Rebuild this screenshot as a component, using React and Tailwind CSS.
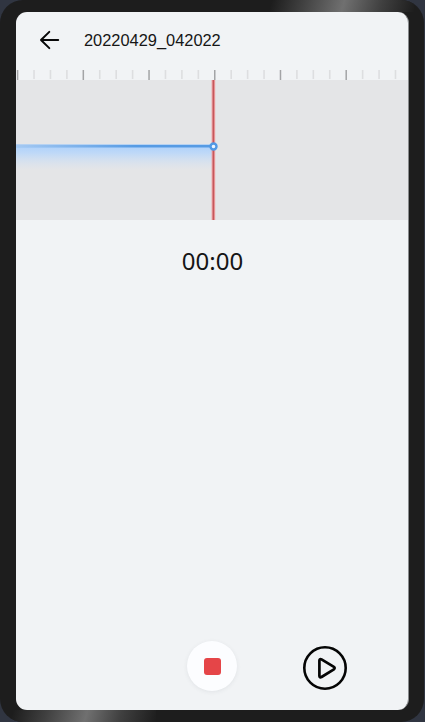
const ticks = Array.from({ length: 24 }, (_, i) => ({
  x: 1.6 + i * 16.43,
  major: i % 4 === 0,
}));

function Header() {
  return (
    <header className="flex h-[58px] shrink-0 items-center pb-0.5 pl-[23px]">
      <svg width="22" height="20" viewBox="0 0 22 20" fill="none" stroke="#080808" strokeWidth="2" strokeLinecap="round" strokeLinejoin="round" aria-label="Back">
        <path d="M10.3 1.9 2 10l8.3 8.1M2 10h17.2" />
      </svg>
      <h1 className="ml-[23px] font-['Liberation_Sans',sans-serif] text-[16.4px] leading-5 text-[#161616]">20220429_042022</h1>
    </header>
  );
}

function Ruler() {
  return (
    <svg className="block h-[10px] w-full shrink-0" viewBox="0 0 392 10" width="392" height="10">
      {ticks.map((t) => (
        <path key={t.x} d={`M${t.x} 0v${t.major ? 10 : 9}`} stroke={t.major ? '#a3a4a6' : '#dddee0'} strokeWidth={t.major ? 1.5 : 1.6} />
      ))}
    </svg>
  );
}

function Waveform() {
  return (
    <svg className="block h-[140px] w-full shrink-0 bg-[#e4e5e7]" width="392" height="140" viewBox="0 0 392 140">
      <defs>
        <linearGradient id="glow" x1="0" y1="0" x2="0" y2="1">
          <stop offset="0" stopColor="#aed1fb" />
          <stop offset="0.3" stopColor="#bdd8f8" stopOpacity="0.95" />
          <stop offset="1" stopColor="#d3e1f2" stopOpacity="0" />
        </linearGradient>
        <linearGradient id="trace" gradientUnits="userSpaceOnUse" x1="0" y1="0" x2="120" y2="0">
          <stop offset="0" stopColor="#a5c9f2" />
          <stop offset="1" stopColor="#569be4" />
        </linearGradient>
      </defs>
      <rect x="0" y="66" width="197" height="24" fill="url(#glow)" />
      <rect x="0" y="64" width="197" height="4" fill="#9cc7f8" fillOpacity="0.65" />
      <rect x="0" y="65" width="197" height="2.4" fill="url(#trace)" />
      <rect x="195.6" y="0" width="3.6" height="140" fill="#f0a3a5" />
      <rect x="196.6" y="0" width="1.6" height="140" fill="#c4585c" />
      <circle cx="197.5" cy="66.5" r="3" fill="#edf5ff" stroke="#5299e5" strokeWidth="2.4" />
    </svg>
  );
}

function Controls() {
  return (
    <footer className="mt-auto mb-[18px] flex h-[52px] shrink-0 items-center pl-[171px]">
      <button className="flex size-[50px] items-center justify-center rounded-full bg-[#fcfdff] shadow-[0_1px_4px_rgba(70,80,90,0.09)]" aria-label="Stop">
        <span className="size-[17px] rounded-[3px] bg-[#e54548]" />
      </button>
      <button className="mt-1 ml-[65px]" aria-label="Play">
        <svg width="46" height="46" viewBox="0 0 46 46" fill="none" stroke="#050505">
          <circle cx="23" cy="23" r="20.7" strokeWidth="2.6" />
          <path d="M17.4 15.4v15.5c0 1.3 1.1 1.8 2.1 1.1l12.4-7.7c1-.6 1-1.8 0-2.4l-12.4-7.6c-1-.6-2.1-.1-2.1 1.1Z" strokeWidth="2.7" strokeLinejoin="round" />
        </svg>
      </button>
    </footer>
  );
}

export default function App() {
  return (
    <div className="h-[722px] w-[425px] overflow-hidden bg-[#303541]">
      <div className="flex h-[722px] w-[424px] flex-col overflow-hidden rounded-[23px] bg-[#1d1d1d]">
        <div className="ml-[266px] h-3 w-[148px] shrink-0 bg-[linear-gradient(105deg,#1d1d1d_4%,#414141_25%,#707070_52%,#404040_77%,#1d1d1d_100%)]" />
        <main className="ml-4 flex h-[698px] w-[393px] shrink-0 flex-col overflow-hidden rounded-[11px] border-r border-[#898b8d] bg-[#f1f3f5]">
          <Header />
          <Ruler />
          <Waveform />
          <time className="mt-[25px] pl-px text-center font-['Noto_Sans',sans-serif] text-[24px] leading-8 text-[#151515]">00:00</time>
          <Controls />
        </main>
        <div className="ml-[10px] h-3 w-[146px] shrink-0 bg-[linear-gradient(105deg,#1d1d1d_2%,#404040_25%,#707070_52%,#404040_75%,#1d1d1d_100%)]" />
      </div>
    </div>
  );
}
